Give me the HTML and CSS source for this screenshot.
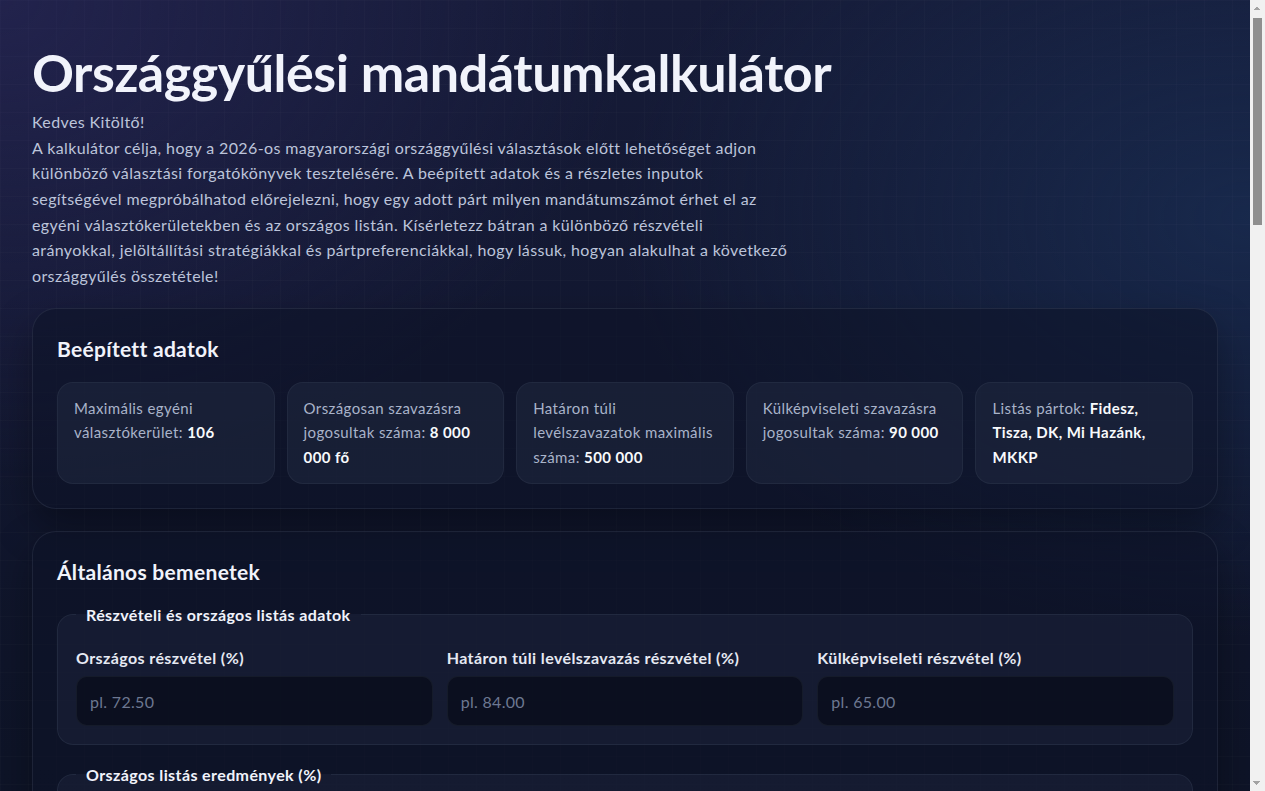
FILE: index.html
```html
<!DOCTYPE html>
<html lang="hu">
<head>
<meta charset="utf-8">
<title>Országgyűlési mandátumkalkulátor</title>
<link rel="stylesheet" href="styles.css">
</head>
<body>
<main class="page">
  <header class="intro">
    <h1 class="title">Országgyűlési mandátumkalkulátor</h1>
    <p class="lead">Kedves Kitöltő!<br>A kalkulátor célja, hogy a 2026-os magyarországi országgyűlési választások előtt lehetőséget adjon<br>különböző választási forgatókönyvek tesztelésére. A beépített adatok és a részletes inputok<br>segítségével megpróbálhatod előrejelezni, hogy egy adott párt milyen mandátumszámot érhet el az<br>egyéni választókerületekben és az országos listán. Kísérletezz bátran a különböző részvételi<br>arányokkal, jelöltállítási stratégiákkal és pártpreferenciákkal, hogy lássuk, hogyan alakulhat a következő<br>országgyűlés összetétele!</p>
  </header>

  <section class="card">
    <h2 class="card-title">Beépített adatok</h2>
    <div class="facts">
      <div class="fact">Maximális egyéni választókerület: <strong>106</strong></div>
      <div class="fact">Országosan szavazásra jogosultak száma: <strong>8 000 000 fő</strong></div>
      <div class="fact">Határon túli levélszavazatok maximális száma: <strong>500 000</strong></div>
      <div class="fact">Külképviseleti szavazásra jogosultak száma: <strong>90 000</strong></div>
      <div class="fact">Listás pártok: <strong>Fidesz, Tisza, DK, Mi Hazánk, MKKP</strong></div>
    </div>
  </section>

  <section class="card">
    <h2 class="card-title">Általános bemenetek</h2>
    <fieldset class="group">
      <legend class="group-title">Részvételi és országos listás adatok</legend>
      <div class="fields">
        <label class="field"><span class="field-label">Országos részvétel (%)</span><input class="input" type="text" placeholder="pl. 72.50"></label>
        <label class="field"><span class="field-label">Határon túli levélszavazás részvétel (%)</span><input class="input" type="text" placeholder="pl. 84.00"></label>
        <label class="field"><span class="field-label">Külképviseleti részvétel (%)</span><input class="input" type="text" placeholder="pl. 65.00"></label>
      </div>
    </fieldset>
    <fieldset class="group">
      <legend class="group-title">Országos listás eredmények (%)</legend>
      <div class="fields">
        <label class="field"><span class="field-label">Fidesz</span><input class="input" type="text" placeholder="pl. 42.00"></label>
        <label class="field"><span class="field-label">Tisza</span><input class="input" type="text" placeholder="pl. 40.00"></label>
        <label class="field"><span class="field-label">DK</span><input class="input" type="text" placeholder="pl. 5.00"></label>
        <label class="field"><span class="field-label">Mi Hazánk</span><input class="input" type="text" placeholder="pl. 7.00"></label>
        <label class="field"><span class="field-label">MKKP</span><input class="input" type="text" placeholder="pl. 4.00"></label>
      </div>
    </fieldset>
    <fieldset class="group">
      <legend class="group-title">Határon túli levélszavazatok megoszlása (%)</legend>
      <div class="fields">
        <label class="field"><span class="field-label">Fidesz</span><input class="input" type="text" placeholder="pl. 90.00"></label>
        <label class="field"><span class="field-label">Tisza</span><input class="input" type="text" placeholder="pl. 6.00"></label>
        <label class="field"><span class="field-label">DK</span><input class="input" type="text" placeholder="pl. 1.00"></label>
        <label class="field"><span class="field-label">Mi Hazánk</span><input class="input" type="text" placeholder="pl. 2.00"></label>
        <label class="field"><span class="field-label">MKKP</span><input class="input" type="text" placeholder="pl. 1.00"></label>
      </div>
    </fieldset>
  </section>

  <section class="card">
    <h2 class="card-title">Egyéni választókerületek</h2>
    <fieldset class="group">
      <legend class="group-title">Jelöltállítás és győzelmek</legend>
      <div class="fields">
        <label class="field"><span class="field-label">Fidesz által nyert körzetek</span><input class="input" type="text" placeholder="pl. 60"></label>
        <label class="field"><span class="field-label">Tisza által nyert körzetek</span><input class="input" type="text" placeholder="pl. 44"></label>
        <label class="field"><span class="field-label">Egyéb párt által nyert körzetek</span><input class="input" type="text" placeholder="pl. 2"></label>
      </div>
    </fieldset>
    <fieldset class="group">
      <legend class="group-title">Töredékszavazatok</legend>
      <div class="fields">
        <label class="field"><span class="field-label">Fidesz töredékszavazat</span><input class="input" type="text" placeholder="pl. 1 200 000"></label>
        <label class="field"><span class="field-label">Tisza töredékszavazat</span><input class="input" type="text" placeholder="pl. 1 100 000"></label>
        <label class="field"><span class="field-label">DK töredékszavazat</span><input class="input" type="text" placeholder="pl. 250 000"></label>
        <label class="field"><span class="field-label">Mi Hazánk töredékszavazat</span><input class="input" type="text" placeholder="pl. 320 000"></label>
        <label class="field"><span class="field-label">MKKP töredékszavazat</span><input class="input" type="text" placeholder="pl. 180 000"></label>
      </div>
    </fieldset>
    <div class="actions">
      <button class="btn" type="button">Mandátumok kiszámítása</button>
    </div>
  </section>

  <section class="card">
    <h2 class="card-title">Eredmények</h2>
    <div class="facts">
      <div class="fact">Fidesz: <strong>–</strong></div>
      <div class="fact">Tisza: <strong>–</strong></div>
      <div class="fact">DK: <strong>–</strong></div>
      <div class="fact">Mi Hazánk: <strong>–</strong></div>
      <div class="fact">MKKP: <strong>–</strong></div>
    </div>
    <p class="note">Az eredmények a megadott bemenetek alapján, a D'Hondt-módszerrel kerülnek kiszámításra. Összesen 199 mandátum osztható ki.</p>
  </section>
</main>
</body>
</html>
```

FILE: styles.css
```css
/* the root background mimics the browser's classic scrollbar strip on the right */
html {
  background-color: #f1f1f1;
  background-image:
    linear-gradient(to top left, #a3a3a3 50%, transparent 50%),
    linear-gradient(to top right, #a3a3a3 50%, transparent 50%),
    linear-gradient(#8f8f8f, #8f8f8f),
    linear-gradient(to bottom left, #a3a3a3 50%, transparent 50%),
    linear-gradient(to bottom right, #a3a3a3 50%, transparent 50%);
  background-size: 4px 4px, 4px 4px, 9px 207px, 4px 4px, 4px 4px;
  background-position: 1253px 6px, 1257px 6px, 1253px 18px, 1253px 781px, 1257px 781px;
  background-repeat: no-repeat;
}

body {
  margin: 0 15px 0 0;
  min-height: 100vh;
  font-family: "Segoe UI", Lato, "Noto Sans", sans-serif;
  color: #c3cade;
  background-color: #0c1122;
  background-image:
    linear-gradient(rgba(255, 255, 255, 0.016) 1px, transparent 1px),
    linear-gradient(90deg, rgba(255, 255, 255, 0.016) 1px, transparent 1px),
    radial-gradient(ellipse 900px 700px at 0% 0%, rgba(36, 36, 80, 0.85), rgba(36, 36, 80, 0) 70%),
    radial-gradient(ellipse 900px 600px at 100% 10%, rgba(24, 42, 78, 0.9), rgba(24, 42, 78, 0) 70%),
    linear-gradient(180deg, #161b38 0%, #0e1428 35%, #0b1020 100%);
  background-size: 28px 28px, 28px 28px, 100% 100%, 100% 100%, 100% 100%;
}

.page {
  padding: 44px 32px 60px;
  overflow: hidden;
}

.title {
  margin: 0;
  font-size: 52px;
  line-height: 1.1;
  font-weight: 700;
  color: #f1f3fb;
  letter-spacing: -0.45px;
}

.lead {
  margin: 8px 0 20px;
  max-width: 800px;
  font-size: 16px;
  line-height: 1.6;
  letter-spacing: 0.38px;
  color: #bcc4da;
}

.card {
  margin-bottom: 22px;
  padding: 25px 24px 24px;
  border-radius: 24px;
  border: 1px solid rgba(148, 163, 184, 0.12);
  background: rgba(13, 18, 38, 0.55);
  box-shadow: 0 18px 40px rgba(0, 0, 0, 0.35);
}

.card-title {
  margin: 0 0 18px;
  font-size: 21px;
  line-height: 1.4;
  font-weight: 700;
  letter-spacing: 0.3px;
  color: #f1f3fb;
}

.facts {
  display: grid;
  grid-template-columns: repeat(5, 1fr);
  gap: 12px;
}

.fact {
  padding: 13px 16px 14px;
  border-radius: 16px;
  border: 1px solid rgba(148, 163, 184, 0.08);
  background: rgba(30, 38, 62, 0.6);
  font-size: 15px;
  line-height: 24.5px;
  letter-spacing: 0.4px;
  color: #a9b3c9;
}

.fact strong {
  color: #f8fafc;
  font-weight: 700;
}

.group {
  margin: 0 0 20px;
  padding: 24px 18px 18px;
  border-radius: 16px;
  border: 1px solid rgba(148, 163, 184, 0.1);
  background: rgba(30, 38, 62, 0.45);
}

.group:last-child {
  margin-bottom: 0;
}

.group-title {
  padding: 0 10px;
  font-size: 16px;
  font-weight: 700;
  letter-spacing: 0.4px;
  color: #f1f3fb;
}

.fields {
  display: grid;
  grid-template-columns: repeat(3, 1fr);
  gap: 18px 14px;
}

.field {
  display: flex;
  flex-direction: column;
  gap: 8px;
}

.field-label {
  font-size: 16px;
  line-height: 1.3;
  font-weight: 700;
  letter-spacing: 0.4px;
  color: #e6e9f2;
}

.input {
  box-sizing: border-box;
  height: 50px;
  padding: 0 13px;
  border-radius: 11px;
  border: 1px solid rgba(148, 163, 184, 0.08);
  background: rgba(8, 12, 26, 0.75);
  color: #e6e9f2;
  font-family: inherit;
  font-size: 16px;
  letter-spacing: 0.3px;
  outline: none;
}

.input::placeholder {
  color: #6d7891;
}

.actions {
  display: flex;
  justify-content: flex-end;
  margin-top: 20px;
}

.btn {
  padding: 14px 26px;
  border: 0;
  border-radius: 12px;
  background: linear-gradient(90deg, #4f46e5, #2563eb);
  color: #fff;
  font-family: inherit;
  font-size: 16px;
  font-weight: 700;
}

.note {
  margin: 18px 0 0;
  font-size: 15px;
  line-height: 1.6;
  color: #a9b3c9;
}
```
